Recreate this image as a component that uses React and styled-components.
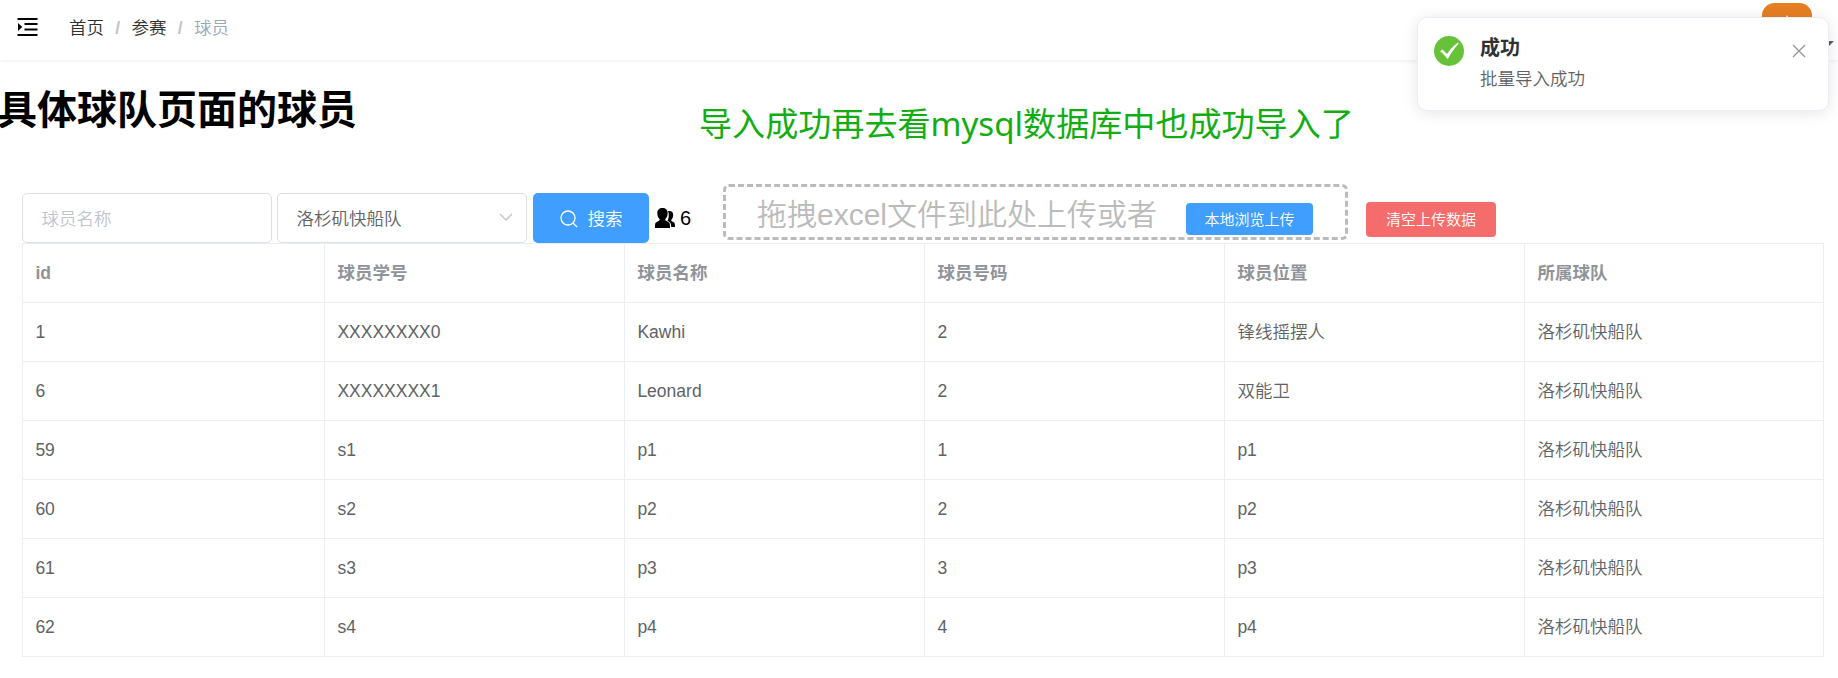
import React from 'react';
import styled, { createGlobalStyle } from 'styled-components';

const GlobalStyle = createGlobalStyle`
  * { box-sizing: border-box; }
  body {
    margin: 0;
    background: #fff;
    overflow: hidden;
    font-family: "Liberation Sans", "Noto Sans CJK SC", sans-serif;
    font-size: 17.5px;
  }
`;

const Page = styled.div`
  position: relative;
  height: 678px;
  overflow: hidden;
`;

const Navbar = styled.header`
  display: flex;
  align-items: flex-start;
  justify-content: space-between;
  height: 60px;
  padding: 0 26px 0 17px;
  box-shadow: 0 1px 4px rgba(0, 21, 41, 0.08);
`;

const NavLeft = styled.div`
  display: flex;
  align-items: center;
  gap: 31px;
  height: 53px;
`;

const Breadcrumb = styled.nav`
  display: flex;
  align-items: center;
  line-height: 26px;
  padding-top: 2px;
`;

const Crumb = styled.span`
  color: ${(p) => (p.$current ? '#97a8be' : '#303133')};
  font-weight: 350;
`;

const Separator = styled.span`
  width: 27.5px;
  text-align: center;
  font-weight: 700;
  color: #c0c4cc;
`;

const Avatar = styled.div`
  display: flex;
  justify-content: center;
  width: 50px;
  height: 50px;
  margin-top: 3px;
  padding-top: 12px;
  border-radius: 12.5px;
  background: #e67e22;
`;

const Caret = styled.i`
  position: absolute;
  top: 41px;
  right: 4px;
  border: 6px solid transparent;
  border-top-color: #5a5e66;
  border-bottom: 0;
`;

const TitleRow = styled.div`
  display: flex;
  align-items: flex-start;
  height: 124px;
  padding-top: 20px;
`;

const Title = styled.h1`
  width: 702px;
  margin: 1px 0 0 -3px;
  font-size: 40px;
  line-height: 58px;
  font-weight: 700;
  color: #000;
`;

const Note = styled.p`
  margin: 17px 0 0;
  font-family: "Noto Sans", "Noto Sans CJK SC", sans-serif;
  font-size: 33.1px;
  line-height: 54px;
  font-weight: 400;
  color: #13ad13;
  white-space: nowrap;
`;

const Toolbar = styled.div`
  display: flex;
  align-items: flex-start;
  height: 59px;
  padding-left: 22px;
`;

const Field = styled.div`
  display: flex;
  align-items: center;
  justify-content: space-between;
  width: 250px;
  height: 50px;
  margin: 9px 5px 0 0;
  padding: 0 13px 2px 18.5px;
  border: 1px solid #dcdfe6;
  border-radius: 5px;
  color: ${(p) => (p.$placeholder ? '#c0c4cc' : '#606266')};
  font-weight: 350;
`;

const Button = styled.button`
  display: flex;
  align-items: center;
  justify-content: center;
  flex: none;
  gap: ${(p) => p.$gap || 0}px;
  width: ${(p) => p.$width}px;
  height: ${(p) => p.$height}px;
  margin: ${(p) => p.$margin || 0};
  padding: 0 0 2px;
  border: 0;
  border-radius: ${(p) => p.$radius || 4}px;
  background: ${(p) => (p.$danger ? '#f56c6c' : '#409eff')};
  color: #fff;
  font: ${(p) => p.$size || 15}px "Liberation Sans", "Noto Sans CJK SC", sans-serif;
  font-weight: 350;

  svg {
    position: relative;
    top: 2px;
  }
`;

const Counter = styled.div`
  display: flex;
  align-items: center;
  gap: 5px;
  width: 68px;
  height: 50px;
  margin: 9px 0 0 6px;
  font-size: 20px;
  color: #000;
`;

const DropZone = styled.div`
  display: flex;
  align-items: flex-start;
  width: 625px;
  height: 56px;
  padding-left: 31px;
  border: 3px dashed #bbb;
  border-radius: 6px;
  color: #bbb;
  font-size: 30px;
  font-weight: 350;
  line-height: 56px;
  white-space: nowrap;
`;

const DropLabel = styled.span`
  width: 429px;
`;

const Table = styled.table`
  width: 1802px;
  margin-left: 22px;
  border-collapse: collapse;
  table-layout: fixed;
  color: #606266;
`;

const Column = styled.col`
  width: ${(p) => p.$width}px;
`;

const Cell = styled.td`
  height: 59px;
  padding: 0 12px 0 12.4px;
  border: 1px solid #ebeef5;
  text-align: left;
  font-weight: 350;
  line-height: 28px;
`;

const HeadCell = styled(Cell).attrs({ as: 'th' })`
  color: #909399;
  font-weight: 700;
`;

const Notification = styled.aside`
  position: absolute;
  top: 17px;
  right: 9px;
  display: flex;
  width: 412px;
  height: 94px;
  padding: 18px 22px 0 16px;
  border: 1px solid #ebeef5;
  border-radius: 10px;
  background: #fff;
  box-shadow: 0 2px 15px rgba(0, 0, 0, 0.1);
`;

const NotificationBody = styled.div`
  flex: 1;
  margin: -2px 0 0 16px;
`;

const NotificationTitle = styled.h2`
  margin: 0;
  font-size: 20px;
  line-height: 28px;
  font-weight: 700;
  color: #303133;
`;

const NotificationText = styled.p`
  margin: 4px 0 0;
  line-height: 26px;
  font-weight: 350;
  color: #606266;
`;

const CloseIcon = styled.svg`
  margin-top: 8px;
`;

const FoldIcon = () => (
  <svg width="21" height="18" viewBox="0 0 21 18">
    <path d="M.5 1h20M7.500 6h13M7.500 11.500h13M.5 17h20" stroke="#000" strokeWidth="1.800" fill="none" />
    <path d="M1 5v8l4.300-4z" />
  </svg>
);

const AvatarMark = () => (
  <svg width="20" height="20" viewBox="0 0 20 20">
    <path d="M10 0l3 6H7z" fill="#fff" />
  </svg>
);

const SearchIcon = () => (
  <svg width="18" height="18" viewBox="0 0 18 18" fill="none" stroke="#fff" strokeWidth="1.300">
    <circle cx="8" cy="8" r="7" />
    <path d="M13 13l4 4" />
  </svg>
);

const ChevronIcon = () => (
  <svg width="14" height="8" viewBox="0 0 14 8" fill="none" stroke="#c0c4cc" strokeWidth="1.300">
    <path d="M1 1l6 6 6-6" />
  </svg>
);

const PeopleIcon = () => (
  <svg width="20" height="20" viewBox="0 0 20 20">
    <path d="M7.500 0C4.300 0 2.300 2 2.300 5c0 2.600.9 4.800 2.300 6v1.300L1 14.500C.2 15 0 16 0 20h15c0-4-.2-5-1-5.500l-3.700-2.200V11c1.400-1.200 2.400-3.400 2.400-6 0-3-2-5-5.200-5z" />
    <path d="M13 3c3.500-.5 5.200 1 5.200 4 0 2.200-.8 3.800-1.900 4.800v1.200l2.700 1.500c.8.500 1 1.500 1 4.500h-3.800c-.1-2.500-.4-4-1.500-4.700l-2.300-1.600c1.300-1.700 2.100-6 .6-9.700z" />
  </svg>
);

const SuccessIcon = () => (
  <svg width="30" height="30" viewBox="0 0 30 30">
    <circle cx="15" cy="15" r="15" fill="#67c23a" />
    <path d="M6 15.500l2.500-2 4.500 4.500C16 13.500 19.500 9.500 24 6.500l.8 1C20.500 12 17 17 13.700 23.200 11.500 20 9 17.500 6 15.500z" fill="#fff" />
  </svg>
);

const columns = [
  { name: 'id', width: 302 },
  { name: '球员学号', width: 300 },
  { name: '球员名称', width: 300 },
  { name: '球员号码', width: 300 },
  { name: '球员位置', width: 300 },
  { name: '所属球队', width: 299 },
];

const players = [
  ['1', 'XXXXXXXX0', 'Kawhi', '2', '锋线摇摆人', '洛杉矶快船队'],
  ['6', 'XXXXXXXX1', 'Leonard', '2', '双能卫', '洛杉矶快船队'],
  ['59', 's1', 'p1', '1', 'p1', '洛杉矶快船队'],
  ['60', 's2', 'p2', '2', 'p2', '洛杉矶快船队'],
  ['61', 's3', 'p3', '3', 'p3', '洛杉矶快船队'],
  ['62', 's4', 'p4', '4', 'p4', '洛杉矶快船队'],
];

export default function App() {
  return (
    <Page>
      <GlobalStyle />
      <Navbar>
        <NavLeft>
          <FoldIcon />
          <Breadcrumb>
            <Crumb>首页</Crumb>
            <Separator>/</Separator>
            <Crumb>参赛</Crumb>
            <Separator>/</Separator>
            <Crumb $current>球员</Crumb>
          </Breadcrumb>
        </NavLeft>
        <Avatar>
          <AvatarMark />
        </Avatar>
        <Caret />
      </Navbar>

      <TitleRow>
        <Title>具体球队页面的球员</Title>
        <Note>导入成功再去看mysql数据库中也成功导入了</Note>
      </TitleRow>

      <Toolbar>
        <Field $placeholder>球员名称</Field>
        <Field>
          洛杉矶快船队
          <ChevronIcon />
        </Field>
        <Button $width={116} $height={50} $margin="9px 0 0 1px" $size={17.5} $gap={10} $radius={5}>
          <SearchIcon />
          搜索
        </Button>
        <Counter>
          <PeopleIcon />6
        </Counter>
        <DropZone>
          <DropLabel>拖拽excel文件到此处上传或者</DropLabel>
          <Button $width={127} $height={32} $margin="16px 0 0">
            本地浏览上传
          </Button>
        </DropZone>
        <Button $danger $width={130} $height={35} $margin="18px 0 0 18px">
          清空上传数据
        </Button>
      </Toolbar>

      <Table>
        <colgroup>
          {columns.map((column) => (
            <Column key={column.name} $width={column.width} />
          ))}
        </colgroup>
        <thead>
          <tr>
            {columns.map((column) => (
              <HeadCell key={column.name}>{column.name}</HeadCell>
            ))}
          </tr>
        </thead>
        <tbody>
          {players.map((player) => (
            <tr key={player[0]}>
              {player.map((value, i) => (
                <Cell key={columns[i].name}>{value}</Cell>
              ))}
            </tr>
          ))}
        </tbody>
      </Table>

      <Notification>
        <SuccessIcon />
        <NotificationBody>
          <NotificationTitle>成功</NotificationTitle>
          <NotificationText>批量导入成功</NotificationText>
        </NotificationBody>
        <CloseIcon width="14" height="14" viewBox="0 0 14 14" stroke="#909399" strokeWidth="1.300">
          <path d="M1 1l12 12M13 1L1 13" />
        </CloseIcon>
      </Notification>
    </Page>
  );
}
